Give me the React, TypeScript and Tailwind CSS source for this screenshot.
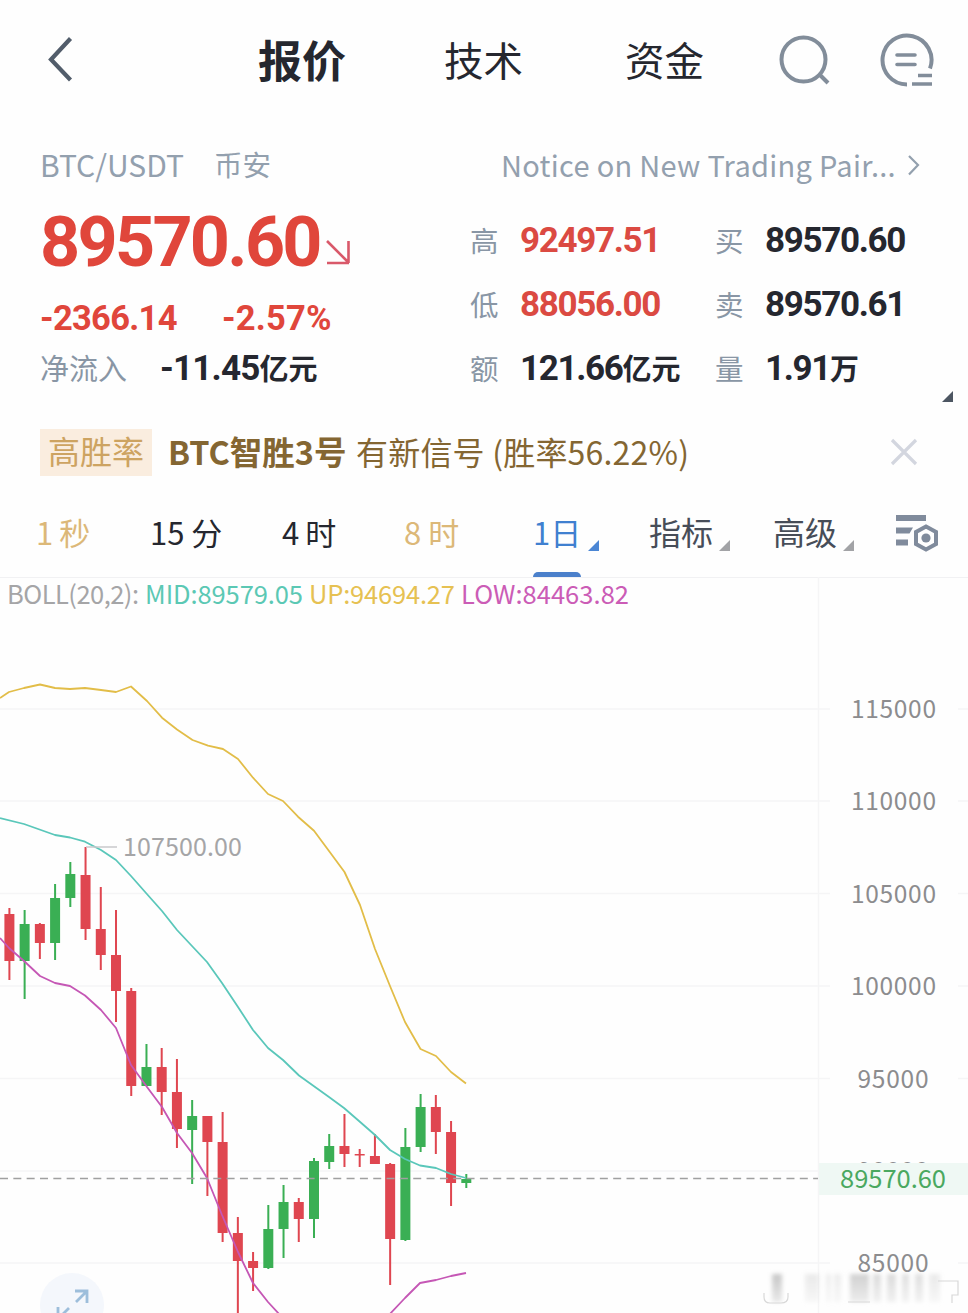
import { clsx } from 'clsx'

type Candle = {
  up: boolean
  high: number
  top: number
  bottom: number
  low: number
}

const c = (side: 'g' | 'r', high: number, top: number, bottom: number, low: number): Candle => ({
  up: side === 'g',
  high,
  top,
  bottom,
  low,
})

// vertical positions inside the chart, left to right
const CANDLES: Candle[] = [
  c('r', 331, 337, 384, 403),
  c('g', 333, 347, 384, 422),
  c('r', 346, 347, 366, 382),
  c('g', 307, 321, 366, 383),
  c('g', 285, 297, 321, 330),
  c('r', 270, 298, 352, 363),
  c('r', 310, 352, 378, 393),
  c('r', 333, 378, 414, 445),
  c('r', 411, 414, 509, 519),
  c('g', 467, 490, 509, 509),
  c('r', 471, 490, 515, 538),
  c('r', 482, 515, 552, 571),
  c('g', 523, 539, 553, 607),
  c('r', 539, 539, 565, 619),
  c('r', 535, 565, 656, 665),
  c('r', 640, 656, 684, 740),
  c('r', 675, 684, 691, 714),
  c('g', 628, 652, 691, 692),
  c('g', 608, 625, 652, 681),
  c('r', 621, 625, 642, 665),
  c('g', 581, 584, 642, 661),
  c('g', 557, 569, 585, 592),
  c('r', 537, 569, 577, 590),
  c('r', 572, 577, 578.5, 590),
  c('r', 557, 579, 587, 587),
  c('r', 586, 587, 662, 708),
  c('g', 551, 570, 663, 664),
  c('g', 517, 530, 570, 575),
  c('r', 518, 530, 555, 577),
  c('r', 544, 555, 606, 629),
  c('g', 597, 602, 606, 611),
]

const UP_LINE =
  '0,121 9,115 24,111 40,107.5 55,111 70,112 85,111 101,113 116,115 131,109.5 147,124 162,140.7 177,152.5 192.5,163 208,168.7 223,172 238,182 253,200.7 268,217 283,224 298,239.7 314,253.7 329,274 344.5,295 360,328 375,372 390,409 405,445 420.5,472 436,479 451,495 466,506.5'

const MID_LINE =
  '0,241 24,247 55,258 70,260.5 85,264.7 101,273 116,283 131,299 146,316 162,334 177,353 207,385 222,406 238,430 253,453 268,471 283,483 299,498.5 329,520 344,531 359,544 375,558 390,573 405,582 420,588.5 436,591 451,597 466,601'

const LOW_LINE_LEFT =
  '0,361 9,371 24,384 40,399 55,406 70,409 85,418.5 101,433 116,451 131,488 147,510 162,530 177,556 192,576 207,601 222,638 238,675 253,706 268,725 280,738'

const LOW_LINE_RIGHT = '388,739 405,721 420,706 436,703 451,699 466,696'

const PRICE_TICKS = [
  { label: '115000', y: 132 },
  { label: '110000', y: 224 },
  { label: '105000', y: 316.5 },
  { label: '100000', y: 409 },
  { label: '95000', y: 501.5 },
  { label: '90000', y: 594 },
  { label: '85000', y: 686 },
]

function Header() {
  return (
    <header className="flex h-[120px] items-center text-[#25272f]">
      <svg className="ml-[46px] h-12 w-[30px]" viewBox="0 0 30 48" fill="none" stroke="#525d6b" strokeWidth="4.2">
        <path d="M24.5 2.5 5 23.5 24.5 44" />
      </svg>
      <nav className="-mt-[3px] ml-[182px] flex items-center whitespace-nowrap text-[39.500px]">
        <span className="w-[186px] text-[44px] font-bold">报价</span>
        <span className="w-[181px]">技术</span>
        <span className="w-[153px]">资金</span>
      </nav>
      <svg className="h-[54px] w-[54px]" viewBox="0 0 54 54" fill="none" stroke="#828d9a" strokeWidth="4">
        <circle cx="25.5" cy="26.500" r="22" />
        <path d="m41 41 9 9" />
      </svg>
      <svg className="ml-[47px] h-[56px] w-[56px]" viewBox="0 0 56 56" fill="none" stroke="#828d9a" strokeWidth="4">
        <path d="M28 52.500a24.500 24.500 0 1 1 23-16" />
        <path d="M18 23h18M18 32.500h18" strokeLinecap="round" strokeWidth="3.6" />
        <path d="M39 43.500h14M33 52h20" strokeWidth="3.600" />
      </svg>
    </header>
  )
}

function Stat({ label, value, unit, red }: { label: string; value: string; unit?: string; red?: boolean }) {
  return (
    <div className="flex h-16 items-center whitespace-nowrap">
      <span className="w-[50px] text-[28.500px] text-[#8996a5]">{label}</span>
      <span
        className={clsx(
          'mt-[3px] font-[Roboto] text-[35px] font-bold tracking-[-1.350px]',
          red ? 'text-[#db4a42]' : 'text-[#25272f]',
        )}
      >
        {value}
      </span>
      {unit && <span className="text-[29px] font-bold text-[#25272f]">{unit}</span>}
    </div>
  )
}

function Quote() {
  return (
    <section className="h-[300px]">
      <div className="mb-[3px] flex h-[89px] items-center whitespace-nowrap text-[28.500px] text-[#93a0ae]">
        <span className="ml-10 w-[174px] text-[30px]">BTC/USDT</span>
        <span className="w-[287px]">币安</span>
        <span className="w-[400px] text-[29px] tracking-[0.300px]">Notice on New Trading Pair...</span>
        <svg className="h-6 w-5" viewBox="0 0 20 24" fill="none" stroke="#93a0ae" strokeWidth="2.200">
          <path d="m8 3 9 9-9 9.500" />
        </svg>
      </div>

      <div className="flex">
        <div className="ml-10 w-[430px] whitespace-nowrap text-[#e0463b]">
          <div className="flex h-[60px] items-center">
            <span className="w-[284px] font-[Roboto] text-[70px] leading-[60px] font-bold tracking-[-2.700px]">89570.60</span>
            <svg className="mt-5 h-7 w-7" viewBox="0 0 28 28" fill="none" stroke="#d9596a" strokeWidth="2.600">
              <path d="m3 3 21 21M24.500 3v22M3 25h22" />
            </svg>
          </div>
          <div className="mt-[23px] flex h-[48px] items-center font-[Roboto] text-[34.500px] font-bold">
            <span className="w-[182px] tracking-[-0.700px]">-2366.14</span>
            <span className="tracking-[0.200px]">-2.57%</span>
          </div>
          <div className="flex h-[50px] items-center text-[#25272f]">
            <span className="w-[120px] text-[29px] text-[#8996a5]">净流入</span>
            <span className="mt-[3px] font-[Roboto] text-[35px] font-bold tracking-[-0.800px]">-11.45</span>
            <span className="text-[29px] font-bold">亿元</span>
          </div>
        </div>

        <div className="-mt-1 grid grid-cols-[245px_230px] content-start">
          <Stat label="高" value="92497.51" red />
          <Stat label="买" value="89570.60" />
          <Stat label="低" value="88056.00" red />
          <Stat label="卖" value="89570.61" />
          <Stat label="额" value="121.66" unit="亿元" />
          <Stat label="量" value="1.91" unit="万" />
        </div>
      </div>
      <svg className="-mt-[9px] ml-[942px] h-[11px] w-[11px]" viewBox="0 0 11 11" fill="#4d5662">
        <path d="M11 0v11H0z" />
      </svg>
    </section>
  )
}

function SignalBanner() {
  return (
    <div className="flex h-[64px] items-center whitespace-nowrap text-[#846632]">
      <span className="ml-10 flex h-[47px] w-[112px] items-center justify-center bg-[#faeddf] pb-1 text-[32px] text-[#cda361]">
        高胜率
      </span>
      <span className="-mt-px ml-4 w-[188px] text-[32.500px] font-bold">BTC智胜3号</span>
      <span className="-mt-[3px] w-[534px] text-[32px] tracking-[0.200px]">有新信号 (胜率56.22%)</span>
      <svg className="h-7 w-7" viewBox="0 0 28 28" stroke="#d3d6df" strokeWidth="3.200">
        <path d="m2 2 24 24M26 2 2 26" />
      </svg>
    </div>
  )
}

function Corner({ className }: { className: string }) {
  return (
    <svg className={clsx('mt-[25px] h-[11px] w-[11px]', className)} viewBox="0 0 11 11" fill="currentColor">
      <path d="M11 0v11H0z" />
    </svg>
  )
}

function IntervalTabs() {
  return (
    <div className="flex h-[94px] items-center border-b border-[#f1f1f3] pt-1 whitespace-nowrap text-[31px] text-[#25272f]">
      <span className="ml-9 w-[114px] tracking-[-0.500px] text-[#dcb878]">1 秒</span>
      <span className="w-[132px]">15 分</span>
      <span className="w-[122px] tracking-[-0.500px]">4 时</span>
      <span className="w-[129px] text-[#dcb878]">8 时</span>
      <div className="relative flex h-full w-[116px] items-center text-[#4080d0]">
        <span className="w-[55px]">1日</span>
        <Corner className="text-[#4b86d4]" />
        <span className="absolute bottom-0 left-0 h-[5px] w-12 rounded-t-[5px] bg-[#4b80cb]" />
      </div>
      <div className="flex w-[124px] items-center text-[#474d58]">
        <span className="-mt-[3px] w-[70px] text-[32px]">指标</span>
        <Corner className="text-[#a2a3a6]" />
      </div>
      <div className="flex w-[122px] items-center text-[#474d58]">
        <span className="-mt-[3px] w-[70px] text-[32px]">高级</span>
        <Corner className="text-[#a2a3a6]" />
      </div>
      <svg className="h-[38px] w-[44px]" viewBox="0 0 44 38" fill="#808b9c">
        <path d="M1 1h30v6H1zM1 13.500h17l-3.500 6H1zM1 25.500h12v6H1z" />
        <path d="M31 12.500 41 18v12l-10 5.500L21 30V18z" fill="white" stroke="#808b9c" strokeWidth="4" />
        <circle cx="31" cy="24" r="4.600" />
      </svg>
    </div>
  )
}

function Watermark() {
  const bars = [
    { x: 772, w: 10, o: 0.8 },
    { x: 805, w: 14, o: 0.3 },
    { x: 826, w: 5, o: 0.25 },
    { x: 834, w: 7, o: 0.25 },
    { x: 850, w: 19, o: 0.65 },
    { x: 873, w: 8, o: 0.5 },
    { x: 887, w: 9, o: 0.5 },
    { x: 902, w: 7, o: 0.45 },
    { x: 915, w: 8, o: 0.45 },
    { x: 929, w: 11, o: 0.3 },
  ]
  return (
    <g>
      <g filter="url(#soft)">
        {bars.map((b) => (
          <rect key={b.x} x={b.x} y="697" width={b.w} height="28" fill="url(#smear)" opacity={b.o} />
        ))}
      </g>
      <path
        d="M764 716v4q0 6 6 6h11q7 0 7-6v-4M848 725h22M938 704h20v14h-6v8"
        fill="none"
        stroke="#d8d8d8"
        strokeWidth="1.200"
      />
    </g>
  )
}

function Chart() {
  return (
    <svg
      className="block h-[735px] w-full overflow-visible font-['Noto_Sans_CJK_SC',sans-serif]"
      viewBox="0 1 968 735"
      fill="none"
    >
      <defs>
        <linearGradient id="smear" x1="0" y1="0" x2="0" y2="1">
          <stop offset="0" stopColor="#b8b8b8" />
          <stop offset="1" stopColor="#e4e4e4" />
        </linearGradient>
        <filter id="soft" x="-5%" y="-20%" width="110%" height="140%">
          <feGaussianBlur stdDeviation="2" />
        </filter>
      </defs>

      {/* grid */}
      <g stroke="#f5f5f6" strokeWidth="1.500">
        <path d="M818.500 0v736" />
        {PRICE_TICKS.map((t) => (
          <path key={t.label} d={`M0 ${t.y}H830M958 ${t.y}h10`} />
        ))}
      </g>

      <g fontSize="25.500">
        <text x="7" y="27" textLength="132" fill="#a5a5a7">BOLL(20,2):</text>
        <text x="145" y="27" textLength="158" fill="#5bc8b4">MID:89579.05</text>
        <text x="309" y="27" textLength="146" fill="#e6c152">UP:94694.27</text>
        <text x="461" y="27" textLength="168" fill="#cb5cb6">LOW:84463.82</text>
      </g>

      <g fill="#8c8c8e" fontSize="24.500">
        {PRICE_TICKS.map((t) => (
          <text
            key={t.label}
            x={t.label.length === 6 ? 851 : 857.5}
            y={t.y + 9}
            textLength={t.label.length === 6 ? 85 : 71}
          >
            {t.label}
          </text>
        ))}
      </g>

      {CANDLES.map((k, i) => {
        const x = 9.4 + i * 15.23
        const color = k.up ? '#3aaf54' : '#df4650'
        return (
          <g key={i} fill={color}>
            <rect x={x - 1} y={k.high} width="2" height={k.low - k.high} />
            <rect x={x - 5} y={k.top} width="10" height={k.bottom - k.top} />
          </g>
        )
      })}

      <g strokeWidth="1.800" strokeLinejoin="round">
        <polyline points={UP_LINE} stroke="#e2bd48" />
        <polyline points={MID_LINE} stroke="#5ac7ba" />
        <polyline points={LOW_LINE_LEFT} stroke="#c557b5" />
        <polyline points={LOW_LINE_RIGHT} stroke="#c557b5" />
      </g>

      <path d="M86 270h31" stroke="#c9c9cb" strokeWidth="1.500" />
      <text x="123" y="279" fontSize="25" textLength="119" fill="#a5a5a7">107500.00</text>

      {/* last price */}
      <path d="M0 601.500h818" stroke="#a0a0a0" strokeWidth="1.600" strokeDasharray="8 5.330" />
      <rect x="819" y="586" width="149" height="32" fill="#eff8f4" />
      <text x="840" y="611" fontSize="25.500" textLength="106" fill="#4aa860">89570.60</text>

      <Watermark />

      {/* expand button */}
      <circle cx="72" cy="728" r="32" fill="#f4f7fc" />
      <path d="M75 714h12v12M87 714 76 725M58 730v12M69 731 58 742" stroke="#9dbedb" strokeWidth="2.800" />
    </svg>
  )
}

export default function App() {
  return (
    <main className="h-[1313px] w-[968px] overflow-hidden bg-[#fefefe] font-['Noto_Sans_CJK_SC',sans-serif]">
      <Header />
      <Quote />
      <SignalBanner />
      <IntervalTabs />
      <Chart />
    </main>
  )
}
